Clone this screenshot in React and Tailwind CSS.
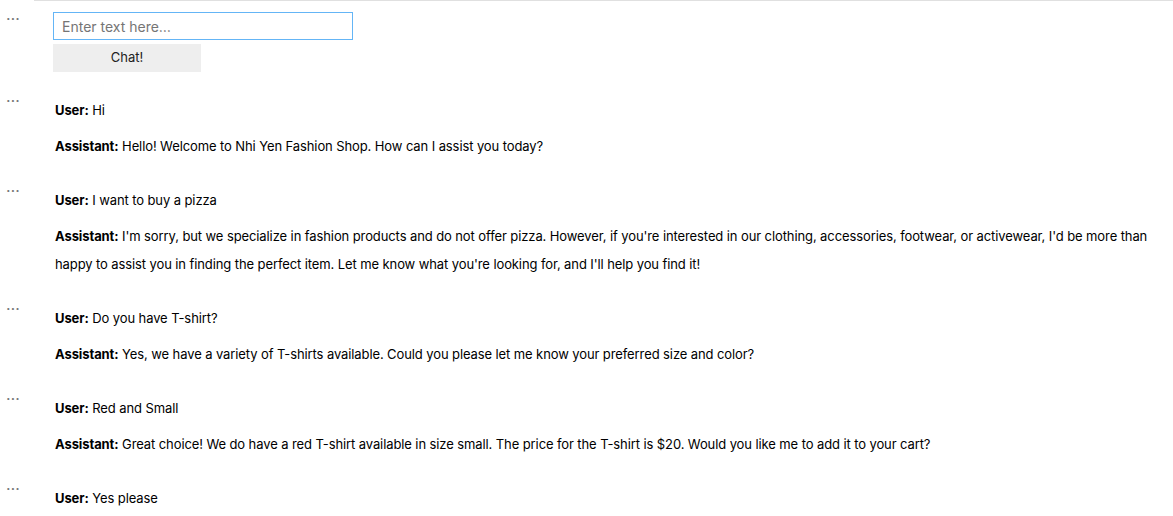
const messages = [
  [
    ['User', 'Hi'],
    ['Assistant', 'Hello! Welcome to Nhi Yen Fashion Shop. How can I assist you today?'],
  ],
  [
    ['User', 'I want to buy a pizza'],
    [
      'Assistant',
      "I'm sorry, but we specialize in fashion products and do not offer pizza. However, if you're interested in our clothing, accessories, footwear, or activewear, I'd be more than happy to assist you in finding the perfect item. Let me know what you're looking for, and I'll help you find it!",
    ],
  ],
  [
    ['User', 'Do you have T-shirt?'],
    ['Assistant', 'Yes, we have a variety of T-shirts available. Could you please let me know your preferred size and color?'],
  ],
  [
    ['User', 'Red and Small'],
    ['Assistant', 'Great choice! We do have a red T-shirt available in size small. The price for the T-shirt is $20. Would you like me to add it to your cart?'],
  ],
  [['User', 'Yes please']],
]

function Prompt() {
  return <div className="w-[53px] shrink-0 pl-[6px] text-[16px] leading-[20px] text-[#777]">…</div>
}

export default function App() {
  return (
    <div className="w-[1173px] h-[516px] overflow-hidden bg-white text-black font-['Inter','Liberation_Sans',sans-serif] text-[13px]">
      <div className="ml-[34px] h-px bg-[#e0e0e0]" />
      {/* input cell */}
      <div className="flex pt-[3px]">
        <Prompt />
        <div className="pt-[8px] pb-[14px]">
          <input
            className="block w-[300px] h-[28px] border border-[#64b5f6] px-[8px] text-[14px] text-black placeholder:text-[#757575] outline-none"
            placeholder="Enter text here…"
          />
          <button className="block mt-[4px] w-[148px] h-[28px] bg-[#eeeeee] text-[13px] text-[#222]">Chat!</button>
        </div>
      </div>
      {messages.map((cell, i) => (
        <div key={i} className="flex">
          <Prompt />
          <div className="flex-1 pt-[10px] pb-[16px] pl-[2px] pr-[12px] space-y-[8px] tracking-[-0.1px]">
            {cell.map(([who, text], j) => (
              <p key={j} className="leading-[28px]">
                <b className="font-bold">{who}:</b> {text}
              </p>
            ))}
          </div>
        </div>
      ))}
    </div>
  )
}
